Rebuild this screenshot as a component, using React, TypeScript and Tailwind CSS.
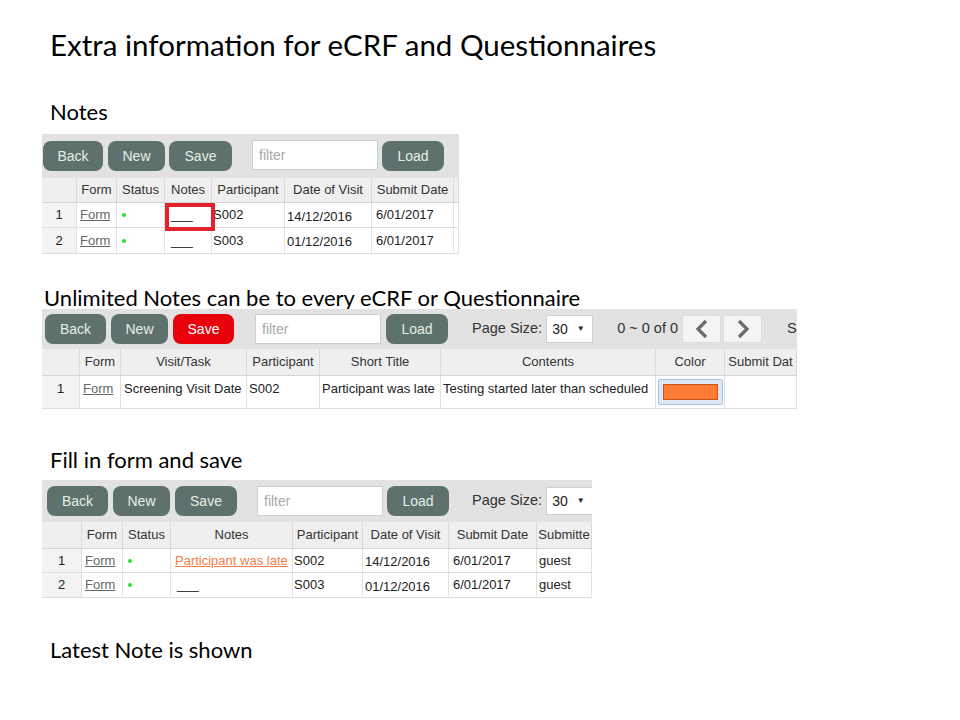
import React from "react";

type Cell = React.ReactNode;

function Btn({ label, w, red }: { label: string; w: number; red?: boolean }) {
  return (
    <div
      style={{ width: w }}
      className={
        "h-[30px] shrink-0 rounded-[8px] flex items-center justify-center text-[14px] font-['Liberation_Sans',Arial,sans-serif] " +
        (red ? "bg-[#e8000b] text-white" : "bg-[#5e716d] text-[#e6eee4]")
      }
    >
      {label}
    </div>
  );
}

function Filter() {
  return (
    <div className="w-[126px] h-[30px] shrink-0 bg-white border border-[#cfcfcf] flex items-center pl-[6px] text-[14px] text-[#a9a9a9] font-['Liberation_Sans',Arial,sans-serif]">
      filter
    </div>
  );
}

function PageSize() {
  return (
    <>
      <div className="shrink-0 text-[14.5px] text-[#333] font-['Liberation_Sans',Arial,sans-serif]">Page Size:</div>
      <div className="ml-[4px] w-[47px] h-[28px] shrink-0 bg-white border border-[#cfcfcf] flex items-center pl-[5px] gap-[9px] text-[14px] text-[#222] font-['Liberation_Sans',Arial,sans-serif]">
        <span>30</span>
        <span className="text-[8px]">▼</span>
      </div>
    </>
  );
}

function Chevron({ dir }: { dir: "l" | "r" }) {
  return (
    <div className="w-[39px] h-[28px] shrink-0 bg-[#f4f4f4] border border-[#dcdcdc] flex items-center justify-center">
      <svg width="14" height="20" viewBox="0 0 14 20">
        <polyline
          points={dir === "l" ? "11,2 3,10 11,18" : "3,2 11,10 3,18"}
          fill="none"
          stroke="#6b6b6b"
          strokeWidth="3.2"
          strokeLinejoin="miter"
        />
      </svg>
    </div>
  );
}

function Dot() {
  return <span className="inline-block w-[4px] h-[4px] rounded-full bg-[#2ee02e] ml-[5px]" />;
}

function FormLink() {
  return <span className="underline text-[#666] ml-[3px]">Form</span>;
}

function Blank() {
  return <span className="ml-[6px] text-[#222]">___</span>;
}

function Table({
  widths,
  headers,
  rows,
  headerH,
  rowHs,
  top,
}: {
  widths: number[];
  headers: Cell[];
  rows: Cell[][];
  headerH: number;
  rowHs: number[];
  top?: boolean;
}) {
  return (
    <div className="font-['Liberation_Sans',Arial,sans-serif] text-[13px] text-[#222]">
      <div className="flex bg-[#efefef] border-b border-[#d6d6d6]" style={{ height: headerH }}>
        {headers.map((h, i) => (
          <div
            key={i}
            style={{ width: widths[i] }}
            className="shrink-0 border-r border-[#dadada] flex items-center justify-center whitespace-nowrap overflow-hidden text-[#333]"
          >
            {h}
          </div>
        ))}
      </div>
      {rows.map((r, ri) => (
        <div key={ri} className="flex bg-white border-b border-[#dedede]" style={{ height: rowHs[ri] }}>
          {r.map((c, i) => (
            <div
              key={i}
              style={{ width: widths[i] }}
              className={
                "shrink-0 border-r border-[#e2e2e2] flex whitespace-nowrap overflow-hidden " +
                (top ? "items-start pt-[3px] " : "items-center ") +
                (i === 0 ? "justify-center bg-[#f3f3f3]" : "")
              }
            >
              {c}
            </div>
          ))}
        </div>
      ))}
    </div>
  );
}

export default function App() {
  return (
    <div className="w-[960px] h-[720px] bg-white overflow-hidden flex flex-col">
      <div className="mt-[28px] ml-[50px] text-[29.5px] leading-[34px] text-black font-['Lato',sans-serif] whitespace-nowrap">
        Extra information for eCRF and Questionnaires
      </div>

      <div className="mt-[38px] ml-[50px] text-[22px] leading-[24px] text-black font-['Lato',sans-serif]">Notes</div>

      {/* Screenshot 1 */}
      <div className="mt-[10px] ml-[42px] w-[417px] overflow-hidden relative">
        <div className="h-[44px] bg-[#e2e2e2] flex items-center">
          <div className="ml-[1px]"><Btn label="Back" w={60} /></div>
          <div className="ml-[5px]"><Btn label="New" w={57} /></div>
          <div className="ml-[4px]"><Btn label="Save" w={63} /></div>
          <div className="ml-[20px] mb-[2px]"><Filter /></div>
          <div className="ml-[4px]"><Btn label="Load" w={62} /></div>
        </div>
        <Table
          widths={[35, 40, 48, 47, 73, 87, 82, 5]}
          headers={["", "Form", "Status", "Notes", "Participant", "Date of Visit", "Submit Date", ""]}
          headerH={25}
          rowHs={[25, 26]}
          rows={[
            ["1", <FormLink />, <Dot />, <Blank />, <span className="ml-[1px]">S002</span>, <span className="ml-[2px] mt-[3px]">14/12/2016</span>, <span className="ml-[4px]">6/01/2017</span>, ""],
            ["2", <FormLink />, <Dot />, <Blank />, <span className="ml-[1px]">S003</span>, <span className="ml-[2px] mt-[3px]">01/12/2016</span>, <span className="ml-[4px]">6/01/2017</span>, ""],
          ]}
        />
        <div className="absolute left-[123px] top-[69px] w-[50px] h-[28px] border-[4px] border-[#e3222b]" />
      </div>

      <div className="mt-[34px] ml-[44px] text-[22px] leading-[20px] text-black font-['Lato',sans-serif] whitespace-nowrap">
        Unlimited Notes can be to every eCRF or Questionnaire
      </div>

      {/* Screenshot 2 */}
      <div className="mt-[1px] ml-[42px] w-[755px] overflow-hidden">
        <div className="h-[40px] bg-[#e2e2e2] flex items-center whitespace-nowrap">
          <div className="ml-[3px]"><Btn label="Back" w={61} /></div>
          <div className="ml-[5px]"><Btn label="New" w={57} /></div>
          <div className="ml-[5px]"><Btn label="Save" w={61} red /></div>
          <div className="ml-[21px]"><Filter /></div>
          <div className="ml-[5px]"><Btn label="Load" w={62} /></div>
          <div className="ml-[24px] flex items-center"><PageSize /></div>
          <div className="ml-[24px] shrink-0 text-[14.5px] text-[#333] font-['Liberation_Sans',Arial,sans-serif]">0 ~ 0 of 0</div>
          <div className="ml-[4px]"><Chevron dir="l" /></div>
          <div className="ml-[2px]"><Chevron dir="r" /></div>
          <div className="ml-[25px] shrink-0 text-[14.5px] text-[#333] font-['Liberation_Sans',Arial,sans-serif]">S</div>
        </div>
        <Table
          widths={[38, 41, 126, 73, 121, 215, 69, 72]}
          headers={["", "Form", "Visit/Task", "Participant", "Short Title", "Contents", "Color", "Submit Dat"]}
          headerH={27}
          rowHs={[33]}
          top
          rows={[
            [
              "1",
              <FormLink />,
              <span className="ml-[3px]">Screening Visit Date</span>,
              <span className="ml-[2px]">S002</span>,
              <span className="ml-[2px]">Participant was late</span>,
              <span className="ml-[2px]">Testing started later than scheduled</span>,
              <div className="ml-[2px] w-[65px] h-[26px] rounded-[2px] bg-[#dde6f4] border border-[#a9c0e2] flex items-center justify-center">
                <div className="w-[55px] h-[16px] bg-[#ff7a33] border border-[#c4561c]" />
              </div>,
              "",
            ],
          ]}
        />
      </div>

      <div className="mt-[39px] ml-[50px] text-[22px] leading-[24px] text-black font-['Lato',sans-serif]">Fill in form and save</div>

      {/* Screenshot 3 */}
      <div className="mt-[8px] ml-[42px] w-[550px] overflow-hidden">
        <div className="h-[42px] bg-[#e2e2e2] flex items-center whitespace-nowrap">
          <div className="ml-[5px]"><Btn label="Back" w={61} /></div>
          <div className="ml-[5px]"><Btn label="New" w={57} /></div>
          <div className="ml-[5px]"><Btn label="Save" w={62} /></div>
          <div className="ml-[20px]"><Filter /></div>
          <div className="ml-[4px]"><Btn label="Load" w={62} /></div>
          <div className="ml-[23px] flex items-center"><PageSize /></div>
        </div>
        <Table
          widths={[40, 41, 48, 122, 70, 86, 88, 55]}
          headers={["", "Form", "Status", "Notes", "Participant", "Date of Visit", "Submit Date", "Submitte"]}
          headerH={27}
          rowHs={[24, 25]}
          rows={[
            ["1", <FormLink />, <Dot />, <span className="ml-[4px] underline text-[#f47d4c]">Participant was late</span>, <span className="ml-[1px]">S002</span>, <span className="ml-[2px] mt-[3px]">14/12/2016</span>, <span className="ml-[4px]">6/01/2017</span>, <span className="ml-[2px]">guest</span>],
            ["2", <FormLink />, <Dot />, <Blank />, <span className="ml-[1px]">S003</span>, <span className="ml-[2px] mt-[3px]">01/12/2016</span>, <span className="ml-[4px]">6/01/2017</span>, <span className="ml-[2px]">guest</span>],
          ]}
        />
      </div>

      <div className="mt-[40px] ml-[50px] text-[22px] leading-[24px] text-black font-['Lato',sans-serif]">Latest Note is shown</div>
    </div>
  );
}
